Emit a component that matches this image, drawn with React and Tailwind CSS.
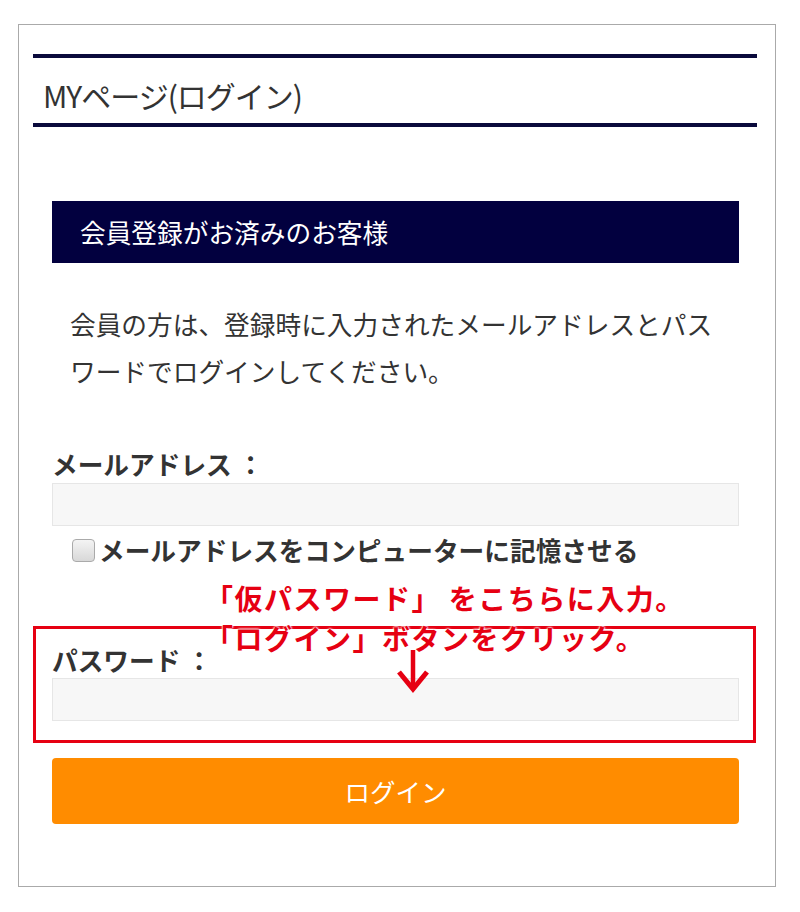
import React from "react";

const jp = { fontFamily: '"Noto Sans CJK JP", "Noto Sans", sans-serif' };

export default function App() {
  return (
    <div className="w-[800px] h-[912px] bg-white pt-[24px] pl-[18px]" style={jp}>
      <div className="relative w-[758px] h-[863px] border border-[#aaaaaa] pl-[14px] pr-[18px] pt-[29px]">
        <div className="border-t-[4px] border-b-[4px] border-[#0a0a3c] h-[73px] flex items-center pl-[10px] pt-[8px]">
          <h1 className="text-[30px] text-[#333] tracking-[-1px] leading-none">MYページ(ログイン)</h1>
        </div>
        <div className="pl-[19px] pr-[18px] pt-[74px]">
          <div className="h-[62px] bg-[#02003f] flex items-center pl-[28px]">
            <h2 className="text-[25.7px] text-white leading-none">会員登録がお済みのお客様</h2>
          </div>
          <p className="pl-[18px] pt-[37px] text-[25.7px] leading-[47px] text-[#333]">
            会員の方は、登録時に入力されたメールアドレスとパス<br />ワードでログインしてください。
          </p>
          <div className="pt-[55px] text-[25.7px] font-bold text-[#333] leading-[30px]">メールアドレス ：</div>
          <div className="mt-[4px] h-[43px] bg-[#f7f7f7] border border-[#e6e6e6]"></div>
          <div className="mt-[12px] flex items-center pl-[20px] h-[24px]">
            <div className="w-[23px] h-[23px] rounded-[4px] border border-[#aaa] bg-gradient-to-b from-[#f4f4f4] to-[#d8d8d8]"></div>
            <span className="ml-[4px] text-[25.7px] font-bold text-[#333] leading-none">メールアドレスをコンピューターに記憶させる</span>
          </div>
          <div className="pt-[83px] text-[25.7px] font-bold text-[#333] leading-[30px]">パスワード ：</div>
          <div className="mt-[3px] h-[43px] bg-[#f7f7f7] border border-[#e6e6e6]"></div>
          <button className="mt-[37px] w-full h-[66px] bg-[#ff8c00] rounded-[4px] text-white text-[25.5px]">ログイン</button>
        </div>

        <div className="absolute left-[14px] top-[601px] w-[723px] h-[117px] border-[3px] border-[#e60012]"></div>
        <div className="absolute left-[186px] top-[553px] text-[28px] font-bold text-[#e60012] leading-[40px] tracking-[1.5px] [text-shadow:0_0_2px_#fff,0_0_2px_#fff,0_0_3px_#fff]">
          <div>「仮パスワード」 をこちらに入力。</div>
          <div>「ログイン」ボタンをクリック。</div>
        </div>
        <svg className="absolute left-[377px] top-[625px]" width="34" height="44" viewBox="0 0 34 44">
          <line x1="17" y1="0" x2="17" y2="38" stroke="#e60012" strokeWidth="4.5" />
          <polyline points="3,22 17,39 31,22" fill="none" stroke="#e60012" strokeWidth="5" />
        </svg>
      </div>
    </div>
  );
}
